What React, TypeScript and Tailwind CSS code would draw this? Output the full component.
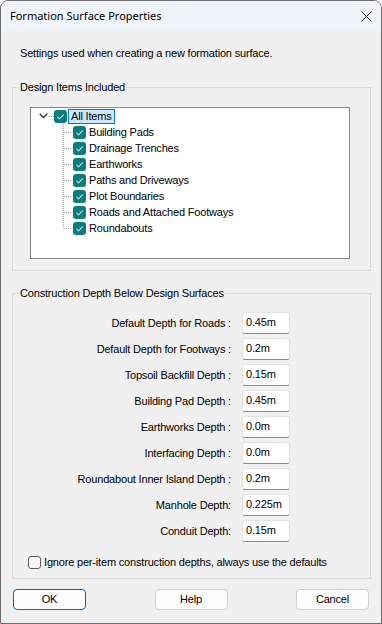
const tree = [
  "Building Pads",
  "Drainage Trenches",
  "Earthworks",
  "Paths and Driveways",
  "Plot Boundaries",
  "Roads and Attached Footways",
  "Roundabouts",
];

const depths = [
  ["Default Depth for Roads :", "0.45m"],
  ["Default Depth for Footways :", "0.2m"],
  ["Topsoil Backfill Depth :", "0.15m"],
  ["Building Pad Depth :", "0.45m"],
  ["Earthworks Depth :", "0.0m"],
  ["Interfacing Depth :", "0.0m"],
  ["Roundabout Inner Island Depth :", "0.2m"],
  ["Manhole Depth:", "0.225m"],
  ["Conduit Depth:", "0.15m"],
];

function TealCheck() {
  return (
    <svg width="13" height="13" viewBox="0 0 13 13" className="shrink-0">
      <rect x="0" y="0" width="13" height="13" rx="3" fill="#0b7d7f" />
      <path d="M3.5 6.8 L5.6 8.8 L9.6 4.6" fill="none" stroke="#cfe7e7" strokeWidth="1.1" />
    </svg>
  );
}

function Connector({ last }: { last: boolean }) {
  return (
    <svg width="10" height="16" className="shrink-0" shapeRendering="crispEdges">
      <line x1="0.5" y1="0" x2="0.5" y2={last ? 8 : 16} stroke="#a0a0a0" strokeDasharray="1 1" />
      <line x1="1" y1="8.5" x2="9" y2="8.5" stroke="#a0a0a0" strokeDasharray="1 1" />
    </svg>
  );
}

function Button({ label, primary }: { label: string; primary?: boolean }) {
  return (
    <button
      className={
        "w-[73px] h-[21px] rounded-[4px] bg-[#fdfdfd] text-black leading-[19px] " +
        (primary ? "border border-[#0067c0]" : "border border-[#d0d0d0]")
      }
    >
      {label}
    </button>
  );
}

export default function App() {
  return (
    <div className="w-[382px] h-[624px] bg-white font-['Liberation_Sans',Arial,sans-serif] text-[11px] tracking-[-0.18px] text-black">
      <div className="w-[382px] h-[624px] border border-[#6e6e6e] rounded-t-[8px] overflow-hidden flex flex-col bg-[#f0f0f0]">
        {/* title bar */}
        <div className="h-[30px] bg-[#eef4f9] flex items-center justify-between pl-[9px] pr-[9px] shrink-0">
          <span className="font-['Noto_Sans',sans-serif] text-[11px] tracking-normal text-black">Formation Surface Properties</span>
          <svg width="11" height="11" viewBox="0 0 11 11">
            <path d="M0.5 0.5 L10.5 10.5 M10.5 0.5 L0.5 10.5" stroke="#1a1a1a" strokeWidth="1" />
          </svg>
        </div>

        <div className="flex flex-col">
          <p className="mt-[16px] ml-[19px] leading-[13px]">Settings used when creating a new formation surface.</p>

          {/* design items */}
          <fieldset className="mt-[21px] ml-[11px] w-[359px] border border-[#dcdcdc] pb-[11px]">
            <legend className="ml-[6px] px-[1px] leading-[13px]">Design Items Included</legend>
            <div className="mt-[13px] ml-[17px] w-[320px] h-[152px] bg-white border border-[#828790]">
              <div className="h-[16px] flex items-center">
                <svg width="9" height="6" viewBox="0 0 9 6" className="ml-[8px] shrink-0">
                  <path d="M0.7 0.7 L4.5 4.5 L8.3 0.7" fill="none" stroke="#303030" strokeWidth="1.3" />
                </svg>
                <svg width="6" height="16" className="shrink-0" shapeRendering="crispEdges">
                  <line x1="1" y1="8.5" x2="6" y2="8.5" stroke="#a0a0a0" strokeDasharray="1 1" />
                </svg>
                <TealCheck />
                <span className="ml-[1px] h-[15px] px-[2px] border border-[#0078d7] bg-[#cce8ff] leading-[13px]">All Items</span>
              </div>
              <div className="flex flex-col">
                {tree.map((t, i) => (
                  <div key={t} className="h-[16px] flex items-center pl-[32px]">
                    <Connector last={i === tree.length - 1} />
                    <TealCheck />
                    <span className="ml-[3px] leading-[13px]">{t}</span>
                  </div>
                ))}
              </div>
            </div>
          </fieldset>

          {/* construction depths */}
          <fieldset className="mt-[16px] ml-[11px] w-[359px] border border-[#dcdcdc] pb-[9px]">
            <legend className="ml-[6px] px-[1px] leading-[13px]">Construction Depth Below Design Surfaces</legend>
            <div className="mt-[12px] flex flex-col gap-[4px]">
              {depths.map(([label, value]) => (
                <div key={label} className="flex items-center h-[22px]">
                  <span className="w-[218px] text-right">{label}</span>
                  <div className="ml-[11px] w-[48px] h-[22px] bg-white border border-[#e3e3e3] border-b-[#8a8a8a] rounded-[3px] pl-[3px] pt-[3px] leading-[13px]">
                    {value}
                  </div>
                </div>
              ))}
            </div>
            <div className="mt-[14px] ml-[15px] flex items-center h-[13px]">
              <span className="w-[13px] h-[13px] rounded-[3px] border border-[#5c5c5c] bg-[#f7f7f7] shrink-0" />
              <span className="ml-[3px] leading-[13px]">Ignore per-item construction depths, always use the defaults</span>
            </div>
          </fieldset>

          <div className="mt-[10px] px-[12px] flex justify-between">
            <Button label="OK" primary />
            <Button label="Help" />
            <Button label="Cancel" />
          </div>
        </div>
      </div>
    </div>
  );
}
